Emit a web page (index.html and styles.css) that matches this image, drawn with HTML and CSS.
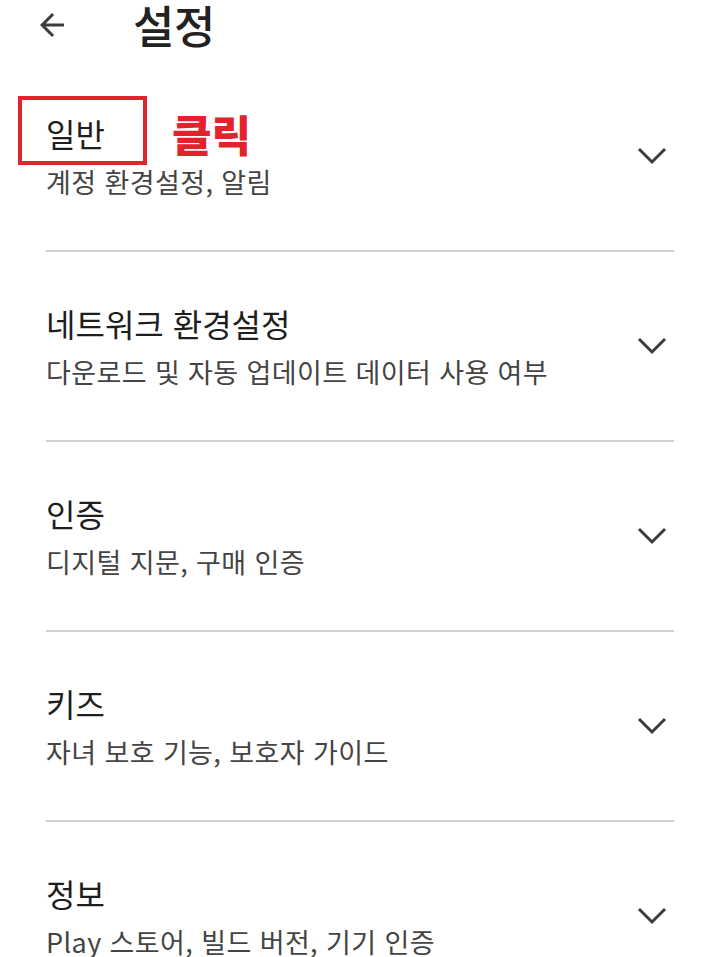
FILE: index.html
```html
<!DOCTYPE html>
<html lang="ko">
<head>
    <meta charset="UTF-8">
    <meta name="viewport" content="width=device-width, initial-scale=1.0">
    <title>설정</title>
    <link rel="stylesheet" href="styles.css">
</head>
<body>
    <header class="top-bar">
        <svg class="back-icon" viewBox="0 0 24 24" width="36" height="36">
            <path d="M20 11H7.83l5.59-5.59L12 4l-8 8 8 8 1.41-1.41L7.83 13H20v-2z" fill="#3c3c3c"/>
        </svg>
        <h1 class="page-title">설정</h1>
    </header>

    <ul class="settings-list">
        <li class="setting">
            <div class="setting-text">
                <div class="setting-title">
                    <span class="mark-box"></span>일반<span class="mark-label">클릭</span>
                </div>
                <div class="setting-desc">계정 환경설정, 알림</div>
            </div>
            <svg class="chevron" viewBox="0 0 30 18" width="30" height="18"><path d="M2 2l13 13L28 2" fill="none" stroke="#3c3c3c" stroke-width="3"/></svg>
        </li>
        <li class="setting">
            <div class="setting-text">
                <div class="setting-title">네트워크 환경설정</div>
                <div class="setting-desc">다운로드 및 자동 업데이트 데이터 사용 여부</div>
            </div>
            <svg class="chevron" viewBox="0 0 30 18" width="30" height="18"><path d="M2 2l13 13L28 2" fill="none" stroke="#3c3c3c" stroke-width="3"/></svg>
        </li>
        <li class="setting">
            <div class="setting-text">
                <div class="setting-title">인증</div>
                <div class="setting-desc">디지털 지문, 구매 인증</div>
            </div>
            <svg class="chevron" viewBox="0 0 30 18" width="30" height="18"><path d="M2 2l13 13L28 2" fill="none" stroke="#3c3c3c" stroke-width="3"/></svg>
        </li>
        <li class="setting">
            <div class="setting-text">
                <div class="setting-title">키즈</div>
                <div class="setting-desc">자녀 보호 기능, 보호자 가이드</div>
            </div>
            <svg class="chevron" viewBox="0 0 30 18" width="30" height="18"><path d="M2 2l13 13L28 2" fill="none" stroke="#3c3c3c" stroke-width="3"/></svg>
        </li>
        <li class="setting">
            <div class="setting-text">
                <div class="setting-title">정보</div>
                <div class="setting-desc">Play 스토어, 빌드 버전, 기기 인증</div>
            </div>
            <svg class="chevron" viewBox="0 0 30 18" width="30" height="18"><path d="M2 2l13 13L28 2" fill="none" stroke="#3c3c3c" stroke-width="3"/></svg>
        </li>
    </ul>
</body>
</html>
```

FILE: styles.css
```css
body {
    margin: 0;
    background: #fff;
    font-family: "Noto Sans CJK KR", "Noto Sans", sans-serif;
    color: #1e1e1e;
    overflow: hidden;
}

.top-bar {
    height: 62px;
    display: flex;
    align-items: center;
    padding-left: 34px;
}

.back-icon {
    margin-top: -12px;
}

.page-title {
    margin: -12px 0 0 63px;
    font-size: 45px;
    line-height: 50px;
    font-weight: 500;
    letter-spacing: -0.5px;
    color: #222;
}

.settings-list {
    list-style: none;
    margin: 0 46px;
    padding: 0;
}

.setting {
    height: 188px;
    border-bottom: 2px solid #cfcfcf;
    display: flex;
    align-items: center;
    justify-content: space-between;
}

.setting-title {
    position: relative;
    font-size: 32px;
    line-height: 40px;
    color: #1e1e1e;
}

.setting-desc {
    font-size: 27px;
    line-height: 34px;
    margin-top: 12px;
    letter-spacing: 0.4px;
    color: #444;
}

.chevron {
    margin-right: 7px;
}

/* red highlight around the first entry */
.mark-box {
    position: absolute;
    left: -28px;
    top: -17px;
    width: 121px;
    height: 61px;
    border: 4px solid #e3232c;
}

.mark-label {
    position: absolute;
    left: 126px;
    top: -2px;
    font-size: 43px;
    line-height: 44px;
    font-weight: 900;
    color: #e3232c;
    white-space: nowrap;
}
```
